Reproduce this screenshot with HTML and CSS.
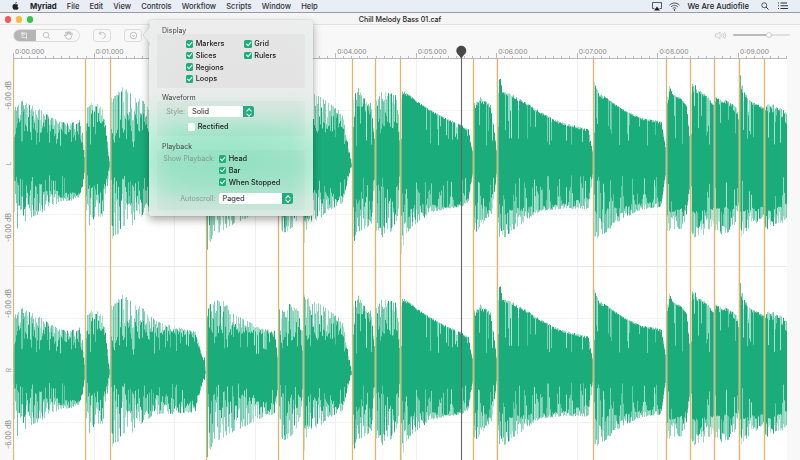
FILE: index.html
```html
<!DOCTYPE html>
<html lang="en">
<head>
<meta charset="utf-8">
<title>Chill Melody Bass 01.caf</title>
<link rel="stylesheet" href="styles.css">
</head>
<body>
<header class="menubar">
  <svg class="apple" viewBox="0 0 16 18"><path d="M11 0c.2 2-1.600 4-3.500 4C7.300 2 9 .2 11 0zM14.500 6.200c-3 1.800-2.500 5.700.7 7-1 2.600-2.500 4.500-4 4.500-1.200 0-1.600-.7-3-.7s-1.900.7-3 .7C2.600 17.700-.9 9.700 2.400 6.100c1.600-1.800 3.500-1.600 5-.9.7.3 1.200.3 1.900 0 1.800-.8 3.900-.6 5.200 1z"/></svg>
  <nav class="menus"><b>Myriad</b><span>File</span><span>Edit</span><span>View</span><span>Controls</span><span>Workflow</span><span>Scripts</span><span>Window</span><span>Help</span></nav>
  <div class="status">
    <svg class="airplay" viewBox="0 0 20 18"><path d="M5 13H1V1h18v12h-4" fill="none" stroke="#333" stroke-width="1.600"/><path d="M10 9l6 8H4z" fill="#222"/></svg>
    <svg class="wifi" viewBox="0 0 22 18" fill="none" stroke="#333" stroke-width="1.700"><path d="M1 6.500C7 .5 15 .5 21 6.500M4.300 9.800c4-4 9.400-4 13.400 0M7.500 13c2-2 5-2 7 0"/><circle cx="11" cy="16" r="1" fill="#333"/></svg>
    <span class="user">We Are Audiofile</span>
    <svg class="search" viewBox="0 0 16 16" fill="none" stroke="#333"><circle cx="6.500" cy="6.500" r="5" stroke-width="1.600"/><path d="M10 10l5 5" stroke-width="2"/></svg>
    <svg class="list" viewBox="0 0 20 16" stroke="#333" stroke-width="2"><path d="M0 2h2M5 2h13M0 7.500h2M5 7.500h15M0 13h2M5 13h15"/></svg>
  </div>
</header>
<div class="titlebar"><div class="lights"><i class="red"></i><i class="amber"></i><i class="green"></i></div><span class="doc">Chill Melody Bass 01.caf</span></div>
<div class="toolbar">
  <div class="tools">
    <span class="tool active"><svg viewBox="0 0 18 18" fill="none" stroke="#f0f0f0" stroke-width="1.400"><path d="M4 1v12h10M1 4h12v13M4 4l6 2-3 3z"/></svg></span>
    <span class="tool"><svg viewBox="0 0 18 18" fill="none" stroke="#b4b4b4" stroke-width="1.500"><circle cx="8" cy="8" r="5.500"/><path d="M12 12l4 4"/></svg></span>
    <span class="tool"><svg viewBox="0 0 18 18" fill="none" stroke="#a8a8a8" stroke-width="1.400"><path d="M6 16L1 9c0-2 2-1.500 4 1L3 3c1-2 2-.5 4 4L7 1.500c1-1.500 2.500-.5 3 5l1-5c1.500-1 2.500 0 1.500 6L15 4c2-.5 2 1 0 7l-2 5z"/></svg></span>
  </div>
  <div class="btn"><svg viewBox="0 0 18 18" fill="none" stroke="#aaa" stroke-width="1.500"><path d="M5 1L2.500 5l4.500 2M3 5c6-4 12-1 11.500 4.500C14 13 11.500 15 9 15.500"/></svg></div>
  <div class="btn second"><svg viewBox="0 0 18 18" fill="none" stroke="#aaa" stroke-width="1.500"><circle cx="9" cy="9" r="6.500"/><path d="M6 8l3 3 3-3"/></svg></div>
  <div class="volume">
    <svg viewBox="0 0 24 18" fill="none" stroke="#c2c2c2" stroke-width="1.500"><path d="M1 6h4l5-4v14l-5-4H1zM13 6q2 3 0 6M16 4q4 5 0 10M19 2q5 7 0 14"/></svg>
    <div class="slider"><i></i></div>
  </div>
</div>
<div class="ruler"><div class="times"><span>0:00.000</span><span>0:01.000</span><span>0:02.000</span><span>0:03.000</span><span>0:04.000</span><span>0:05.000</span><span>0:06.000</span><span>0:07.000</span><span>0:08.000</span><span>0:09.000</span></div><canvas id="ticks" width="774" height="6"></canvas></div>
<main class="editor">
  <aside class="gutter"><span>-6.00 dB</span><span class="ch">L</span><span>-6.00 dB</span><span>-6.00 dB</span><span class="ch">R</span><span>-6.00 dB</span></aside>
  <canvas id="wave" width="774" height="401"></canvas>
</main>
<svg class="playhead" viewBox="0 0 12 416"><path d="M6.500 9v407" stroke="#626362" stroke-width="1.100"/><path d="M6.300 .7a5 5 0 0 1 5 5C11.300 8.500 8.800 9.500 6.300 13.500 3.800 9.500 1.300 8.500 1.300 5.700a5 5 0 0 1 5-5z" fill="#484848"/></svg>

<section class="popover">
  <svg class="arrow" viewBox="0 0 7 22"><path d="M7 0v22C7 17 1 14 .3 11 1 8 7 5 7 0z" fill="#ececec"/><path d="M7 0C7 5 1 8 .3 11 1 14 7 17 7 22" fill="none" stroke="#c9c9c9" stroke-width=".7"/></svg>
  <h2>Display</h2>
  <div class="group display">
    <div class="col"><label><i class="box on"></i>Markers</label><label><i class="box on"></i>Slices</label><label><i class="box on"></i>Regions</label><label><i class="box on"></i>Loops</label></div>
    <div class="col"><label><i class="box on"></i>Grid</label><label><i class="box on"></i>Rulers</label></div>
  </div>
  <h2 class="h-wave">Waveform</h2>
  <div class="group waveform">
    <div class="field"><span class="name">Style:</span><span class="select">Solid<i></i></span></div>
    <label><i class="box"></i>Rectified</label>
  </div>
  <h2 class="h-play">Playback</h2>
  <div class="group playback">
    <div class="field top"><span class="name">Show Playback:</span><div class="col"><label><i class="box on"></i>Head</label><label><i class="box on"></i>Bar</label><label><i class="box on"></i>When Stopped</label></div></div>
    <div class="field auto"><span class="name">Autoscroll:</span><span class="select">Paged<i></i></span></div>
  </div>
</section>
<script src="wave.js"></script>
</body>
</html>
```
FILE: styles.css
```css
* { box-sizing: border-box; }
body { margin: 0; width: 800px; height: 460px; overflow: hidden; position: relative; background: #f8f8f8; font-family: Inter, "Liberation Sans", sans-serif; color: #222; }
svg, canvas { display: block; flex: none; }
i { font-style: normal; display: block; flex: none; }
.menubar { height: 13px; display: flex; align-items: center; background: #e9edf6; border-bottom: 1px solid #979ba3; font-size: 7.600px; line-height: 13px; font-weight: 500; }
.apple { width: 7px; height: 8px; margin-left: 12px; fill: #222; }
.menus { display: flex; gap: 10.100px; margin-left: 11px; color: #333; letter-spacing: -.03px; }
.menus b { font-weight: 700; font-size: 7.800px; color: #222; }
.status { display: flex; align-items: center; margin-left: auto; margin-right: 12.500px; font-size: 7.700px; }
.airplay { width: 10px; height: 9px; margin-right: 7px; }
.wifi { width: 11px; height: 9px; margin-right: 8px; }
.search { width: 8px; height: 8px; margin: 0 9px 0 11.500px; }
.list { width: 10px; height: 8px; }
.titlebar { height: 12px; position: relative; background: #f5f5f5; border-bottom: 1px solid #e2e2e2; text-align: center; line-height: 13px; font-size: 7.100px; font-weight: 500; }
.lights { position: absolute; left: 4.500px; top: 3px; display: flex; gap: 4.500px; }
.lights i { width: 6.500px; height: 6.500px; border-radius: 50%; }
.red { background: #fc5652; } .amber { background: #fdbb3e; } .green { background: #35c648; }
.toolbar { height: 20px; display: flex; align-items: center; padding-left: 13px; }
.tools { width: 67px; height: 13px; border: 1px solid #dcdcdc; border-radius: 7px; display: flex; overflow: hidden; }
.tool { width: 22px; display: flex; align-items: center; justify-content: center; }
.tool.active { background: #b5b5b5; }
.tool svg, .btn svg { width: 9px; height: 9px; }
.btn { width: 18px; height: 13px; border: 1px solid #dcdcdc; border-radius: 3px; margin-left: 13px; display: flex; align-items: center; justify-content: center; }
.volume { margin-left: auto; margin-right: 10px; display: flex; align-items: center; gap: 6px; }
.volume svg { width: 12px; height: 9px; }
.slider { width: 57px; height: 2px; border-radius: 1px; background: linear-gradient(90deg, #bbb 36px, #e0e0e0 36px); position: relative; }
.slider i { position: absolute; left: 33px; top: -2px; width: 6px; height: 6px; border-radius: 50%; background: #fff; border: 1px solid #ccc; }
.ruler { height: 14px; padding-left: 13px; }
.times { display: grid; grid-template-columns: repeat(10, 80.560px); height: 8px; overflow: visible; }
.times span { padding-left: 2px; font-size: 6.800px; line-height: 13px; color: #8a8a8a; white-space: nowrap; }
.editor { display: flex; height: 401px; }
.gutter { width: 13px; display: grid; grid-template-rows: 74px 60px 69px 83px 50px 80px; overflow: hidden; }
.gutter span { writing-mode: vertical-rl; transform: rotate(180deg); text-align: center; font-size: 7px; line-height: 8px; width: 8px; margin-left: 5px; color: #8c8c8c; white-space: nowrap; }
.gutter .ch { font-size: 6px; }
.playhead { position: absolute; left: 455px; top: 45px; width: 12px; height: 416px; }

.popover { position: absolute; left: 149px; top: 20px; width: 164px; height: 196px; padding: 7px 8px 0; border-radius: 3px; font-size: 7.3px; line-height: 9px; font-weight: 500;
  background: radial-gradient(ellipse 100px 45px at 50% 142px, #98e5c6 0%, #98e5c600 100%), linear-gradient(90deg, #e8f1ed66 0, #e8f1ed00 24px, #e8f1ed00 144px, #e8f1ed66 100%), linear-gradient(#ededed 0, #ebebeb 70px, #d8ebe3 88px, #b5ebd5 110px, #a4e8cc 145px, #b3e9d4 168px, #d0e9de 188px, #dde9e4 196px);
  box-shadow: 0 0 1px #0006, 0 4px 9px #0005; }
.arrow { position: absolute; left: -6.500px; top: 4px; width: 7px; height: 22px; }
.popover h2 { margin: 0 0 0 5px; height: 7px; font-size: 7px; line-height: 7px; font-weight: 400; color: #444; }
.group { width: 148px; background: #00000008; }
.display { height: 54px; display: flex; padding: 4px 0 0 28.500px; gap: 0; }
.display .col { width: 58.500px; }
.popover label { display: flex; align-items: center; gap: 2.500px; height: 11.650px; white-space: nowrap; color: #1d1d1d; }
.box { width: 7.700px; height: 7.700px; border-radius: 1.500px; background: #fff; }
.box.on { background: #1eae7d; position: relative; }
.box.on::after { content: ""; position: absolute; left: 2.600px; top: .8px; width: 2.400px; height: 4.400px; border: solid #fff; border-width: 0 1px 1px 0; transform: rotate(40deg); }
.popover .h-wave { margin-top: 6px; }
.waveform { height: 35px; padding-top: 5px; background: #00000005; }
.waveform label { margin: 4px 0 0 30.500px; }
.field { display: flex; align-items: center; }
.name { width: 28px; text-align: right; margin-right: 3px; font-weight: 400; color: #7c8581; opacity: .8; white-space: nowrap; font-size: 7px; }
.select { width: 66px; height: 11px; background: #fff; border-radius: 2px; padding-left: 4px; line-height: 11px; position: relative; font-weight: 400; color: #222; }
.select i { position: absolute; right: 0; top: 0; width: 11px; height: 11px; background: #20ae7e; border-radius: 0 2px 2px 0; }
.select i::before, .select i::after { content: ""; position: absolute; left: 4px; width: 3px; height: 3px; border: solid #fff; border-width: 1px 0 0 1px; transform: rotate(45deg); top: 3px; }
.select i::after { transform: rotate(225deg); top: 5.500px; }
.popover .h-play { margin-top: 7px; }
.playback { height: 60px; padding-top: 3px; background: #00000005; }
.playback .name { width: 58.500px; }
.playback .top .name { width: 58px; font-size: 6.900px; }
.playback .top .col { margin-left: .5px; }
.field.top { align-items: flex-start; }
.top .name { line-height: 12px; }
.auto { margin-top: 5px; }
.auto .select { width: 74px; }
```
FILE: wave.js
```js
const LEFT = 13, TOP = 59, GREEN = '#1aac7a', STEP = 80.56;
const MARKERS = [13.5, 85.3, 110.4, 206.5, 278.6, 303.5, 352, 375.7, 400.7, 473, 497.6, 593.5, 666.7, 690.7, 714.8, 739, 764.3];

// Envelope points per slice: [x, peak top, body top, body bottom, peak bottom]
const SLICES = [
  [[14,110,135,175,215],[17,97,128,176,229],[27,104,128,178,220],[39,108,130,183,214],[50,117,131,186,207],[60,121,132,191,202],[70,123,133,192,201],[79,120,136,192,197],[82,132,142,185,187],[85,158,160,166,168]],
  [[86,109,142,170,211],[89,103,126,180,232],[95,101,122,182,216],[102,108,120,185,217],[105,125,132,180,200],[109,158,160,166,172]],
  [[111,97,142,172,240],[116,94,130,177,238],[122,86,130,178,226],[132,93,130,178,225],[143,101,131,181,215],[150,109,129,184,210],[160,115,127,186,206],[175,119,125,190,207],[195,124,127,192,205],[199,138,140,183,188],[204,157,159,167,168],[207,161,162,164,165]],
  [[207,100,120,180,252],[212,92,126,181,236],[225,94,130,184,229],[235,107,126,187,224],[250,115,124,189,216],[260,121,124,193,211],[274,123,127,195,207],[276,139,142,186,200],[279,158,160,167,168]],
  [[279,94,140,178,226],[284,92,129,182,235],[295,100,130,185,224],[301,106,131,187,210],[304,157,159,167,170]],
  [[304,86,132,182,243],[309,91,130,186,225],[320,97,130,190,218],[330,104,129,192,210],[342,113,125,196,204],[346,136,140,185,187],[350,158,160,167,169]],
  [[352,100,130,195,240],[354,97,120,200,252],[357,86,105,199,232],[362,97,109,198,230],[371,103,112,195,226],[373,126,132,186,200],[376,158,160,166,170]],
  [[376,100,130,180,234],[380,91,125,184,240],[385,92,126,184,239],[395,94,125,184,226],[398,112,130,180,215],[401,158,160,166,170]],
  [[401,90,95,213,254],[407,93,95,207,233],[418,102,103,203,223],[430,110,111,204,213],[445,118,119,207,209],[460,124,126,204,207],[468,129,131,198,205],[471,146,148,177,183],[474,159,160,166,168]],
  [[474,103,109,205,238],[480,97,102,206,225],[490,105,108,206,221],[493,121,124,192,202],[497,158,160,166,169]],
  [[498,90,95,213,238],[499.5,73,92,213,237],[502,92,94,212,239],[511,94,97,209,233],[525,102,104,206,221],[540,112,114,206,211],[560,122,124,204,209],[588,129,131,197,209],[591,145,147,179,188],[594,159,160,166,168]],
  [[594,81,95,206,237],[598,93,98,207,239],[605,97,98,208,233],[620,108,109,207,220],[640,118,119,203,210],[661,121,124,201,207],[664,139,142,180,184],[667,159,160,166,168]],
  [[667,96,103,208,231],[669,85,95,211,232],[672,94,96,211,230],[680,98,99,208,230],[686,104,106,203,222],[689,134,136,188,194],[691,158,160,166,168]],
  [[691,91,97,211,233],[693,77,91,211,238],[696,89,93,211,240],[706,95,97,209,233],[713,104,108,207,225],[715,125,130,198,212]],
  [[715,97,104,208,231],[725,100,103,207,237],[737,107,114,205,223],[739,130,134,196,206]],
  [[739,84,93,208,240],[740.5,71,91,210,240],[744,92,96,210,234],[750,101,103,208,226],[763,107,109,206,220]],
  [[764,105,112,209,242],[768,103,111,210,227],[775,105,114,208,226],[788,111,125,202,220]]
];

let seed = 71;
const rnd = () => { seed = (seed * 16807) % 2147483647; return seed / 2147483647; };

function envelope(points, x) {
  let k = 0;
  while (k < points.length - 2 && x > points[k + 1][0]) k++;
  const a = points[k], b = points[k + 1];
  const t = Math.min(1, Math.max(0, (x - a[0]) / (b[0] - a[0])));
  return a.slice(1).map((v, i) => v + (b[i + 1] - v) * t);
}

const ctx = document.getElementById('wave').getContext('2d');
ctx.fillStyle = '#fff';
ctx.fillRect(0, 0, 774, 401);
ctx.fillStyle = '#f0f0f0';
for (let i = 0; i < 10; i++) ctx.fillRect(Math.round(i * STEP), 0, 1, 401);
for (const y of [110, 214, 266, 318, 422]) {
  ctx.fillStyle = y === 266 ? '#e9e9e9' : '#f2f2f2';
  ctx.fillRect(0, y - TOP, 774, 1);
}

function bar(x, top, bottom, alpha) {
  ctx.fillStyle = GREEN;
  ctx.globalAlpha = alpha;
  ctx.fillRect(x - LEFT, top - TOP, 1, bottom - top);
  ctx.fillRect(x - LEFT, top - TOP + 207.5, 1, bottom - top);
  ctx.globalAlpha = 1;
}

SLICES.forEach((points, s) => {
  const end = s < SLICES.length - 1 ? SLICES[s + 1][0][0] : 787;
  const spiky = s < 8;
  for (let x = points[0][0]; x < end; x++) {
    const [pt, bt, bb, pb] = envelope(points, x);
    const crestT = rnd(), crestB = rnd();
    let ot = pt + (bt - pt) * crestT * crestT * 0.8;
    const ob = pb - (pb - bb) * crestB * crestB * 0.75;
    // Slow swell plus noise keeps the solid body uneven
    const swell = 0.5 + 0.5 * Math.sin(x * 0.75);
    let it = bt - (bt - pt) * swell * rnd() * 0.5 + rnd() * (spiky ? 4 : 1);
    let ib = bb + (pb - bb) * (0.15 + swell * 0.55) * rnd() * (spiky ? 1 : 0.4);
    if (rnd() < (spiky ? 0.3 : 0.4)) it = pt + (bt - pt) * rnd() * 0.8;
    if (rnd() < (spiky ? 0.34 : 0.25)) ib = pb - (pb - bb) * rnd() * 0.8;
    // Narrow notches cut back towards the axis
    if (rnd() < 0.17) it += (148 - it) * (0.25 + rnd() * 0.7);
    if (rnd() < 0.17) ib -= (ib - 174) * (0.3 + rnd() * 0.6);
    if (!spiky && rnd() < 0.14) ot += (148 - ot) * rnd() * 0.25;
    if (s >= 8 && s <= 11) {
      const phase = Math.abs(((x - points[0][0] + 6) % 11.2) - 5.6);
      if (phase > 3.4) ib -= (ib - 174) * (phase - 2.9) * 0.36 * (0.3 + 0.7 * rnd());
    }
    bar(x, Math.min(ot, it), Math.max(ob, ib), 0.3 + rnd() * 0.4);
    bar(x, it, ib, 1);
  }
});

for (const m of MARKERS) {
  ctx.fillStyle = '#f8ddb455';
  ctx.fillRect(Math.floor(m) - LEFT - 1, 0, 3, 401);
  ctx.fillStyle = '#e2b277';
  ctx.fillRect(Math.floor(m) - LEFT, 0, 1, 401);
}

const tick = document.getElementById('ticks').getContext('2d');
tick.fillStyle = '#b9b9b9';
tick.fillRect(0, 5, 774, 1);
for (let i = 0; i < 97; i++) {
  const h = i % 10 === 0 ? 5 : 2;
  tick.fillRect(Math.round(i * STEP / 10), 5 - h, 1, h);
}
```
